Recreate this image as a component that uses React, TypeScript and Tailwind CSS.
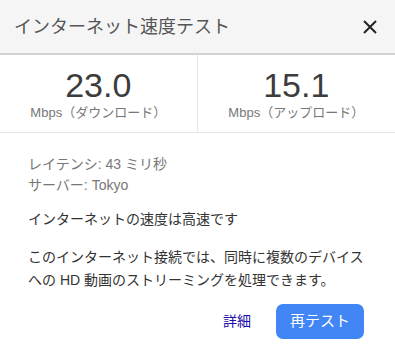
import React from 'react';

const font = { fontFamily: '"Liberation Sans", "Noto Sans CJK JP", sans-serif' };

const Metric: React.FC<{ value: string; label: string; divider?: boolean }> = ({ value, label, divider }) => (
  <div className={`flex flex-col items-center justify-center ${divider ? 'border-r border-[#e6e6e6]' : ''}`}>
    <div className="text-[34px] leading-[34px] text-[#3c3c3c] mt-[2px]">{value}</div>
    <div className="text-[13px] leading-[18px] text-[#777] mt-[2px]">{label}</div>
  </div>
);

const App: React.FC = () => {
  return (
    <div className="w-[395px] h-[350px] bg-white overflow-hidden" style={font}>
      <div className="h-[55px] bg-[#f5f5f5] border-b-2 border-[#d2d2d2] flex items-center justify-between pl-[14px] pr-[17px]">
        <h1 className="text-[18px] text-[#555] mt-[2px]">インターネット速度テスト</h1>
        <svg width="16" height="16" viewBox="0 0 16 16" className="mt-[1px]">
          <path d="M2 2 L14 14 M14 2 L2 14" stroke="#222" strokeWidth="2" />
        </svg>
      </div>
      <div className="grid grid-cols-2 h-[78px] border-b border-[#e6e6e6]">
        <Metric value="23.0" label="Mbps（ダウンロード）" divider />
        <Metric value="15.1" label="Mbps（アップロード）" />
      </div>
      <div className="px-[28px] pt-[21px]">
        <div className="text-[14px] leading-[21px] text-[#777]">
          <p>レイテンシ: 43 ミリ秒</p>
          <p>サーバー: Tokyo</p>
        </div>
        <p className="text-[14px] leading-[22px] text-[#333] mt-[12px]">インターネットの速度は高速です</p>
        <p className="text-[14px] leading-[23px] text-[#333] mt-[16px] whitespace-nowrap">
          このインターネット接続では、同時に複数のデバイス
          <br />
          への HD 動画のストリーミングを処理できます。
        </p>
        <div className="flex items-center justify-end gap-[25px] mt-[12px] pr-[3px]">
          <button className="text-[14px] text-[#1a0dab]">詳細</button>
          <button className="w-[88px] h-[35px] rounded-[7px] bg-[#4285f4] text-white text-[15px]">再テスト</button>
        </div>
      </div>
    </div>
  );
};

export default App;
